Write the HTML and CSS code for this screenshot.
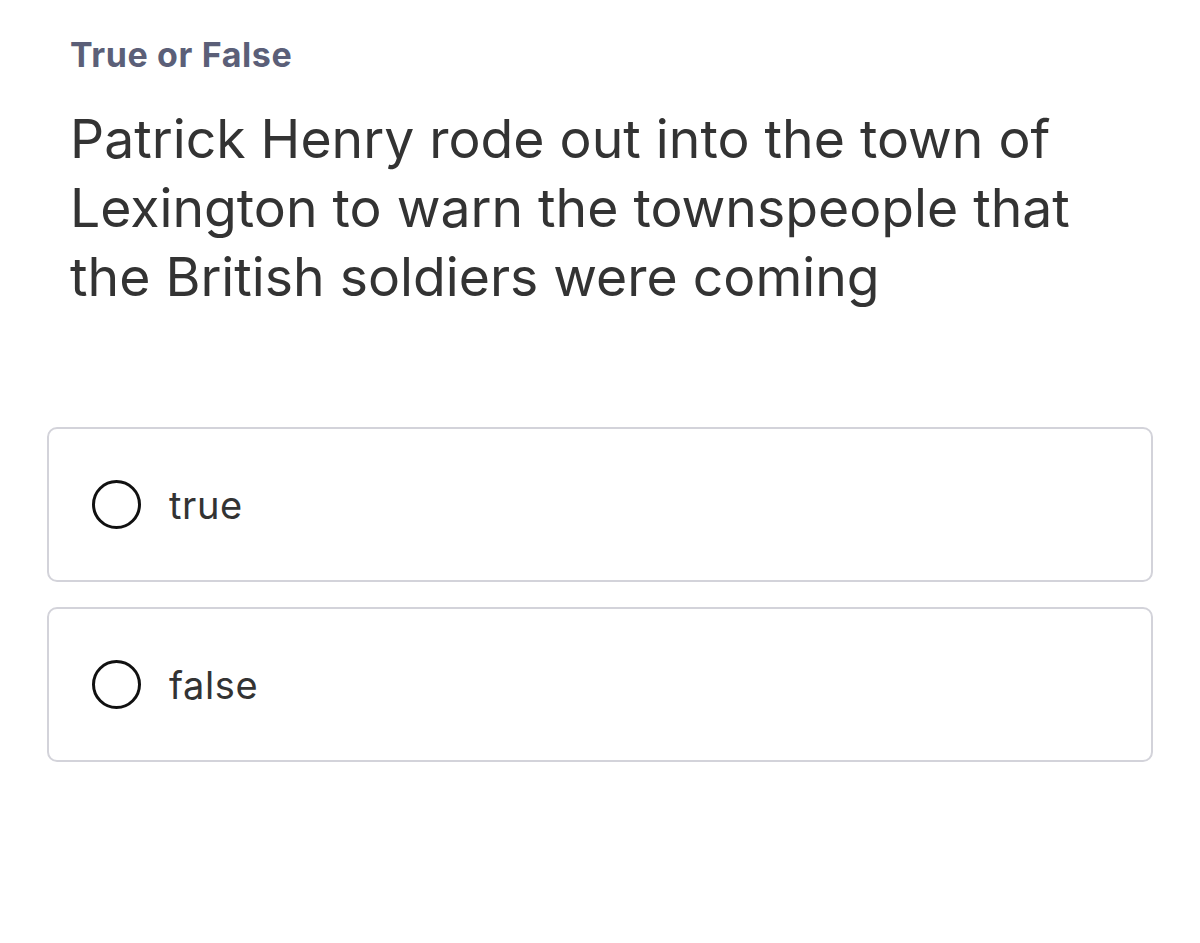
FILE: index.html
```html
<!DOCTYPE html>
<html>
<head>
<meta charset="utf-8">
<link rel="stylesheet" href="styles.css">
</head>
<body>
<div class="page">
  <div class="kind">True or False</div>
  <div class="question">Patrick Henry rode out into the town of Lexington to warn the townspeople that the British soldiers were coming</div>
  <div class="options">
    <div class="option"><span class="radio"></span><span class="label">true</span></div>
    <div class="option"><span class="radio"></span><span class="label">false</span></div>
  </div>
</div>
</body>
</html>
```
FILE: styles.css
```css
html, body { margin: 0; padding: 0; background: #fff; }
body { font-family: Inter, "Noto Sans", sans-serif; }
.page { padding: 35px 47px 0 47px; }
.kind { font-size: 34px; font-weight: 700; color: #5b5f78; padding-left: 23px; line-height: 40px; letter-spacing: 0.6px; }
.question { font-size: 53.5px; color: #333; line-height: 69px; padding-left: 23px; margin-top: 29px; padding-right: 60px; }
.options { margin-top: 116px; display: flex; flex-direction: column; gap: 25px; }
.option { height: 151px; border: 2px solid #d3d3da; border-radius: 10px; display: flex; align-items: center; padding-left: 43px; }
.radio { width: 43px; height: 43px; border: 3px solid #111; border-radius: 50%; flex: none; }
.label { font-size: 38px; color: #333; margin-left: 28px; letter-spacing: 0.6px; }
```
